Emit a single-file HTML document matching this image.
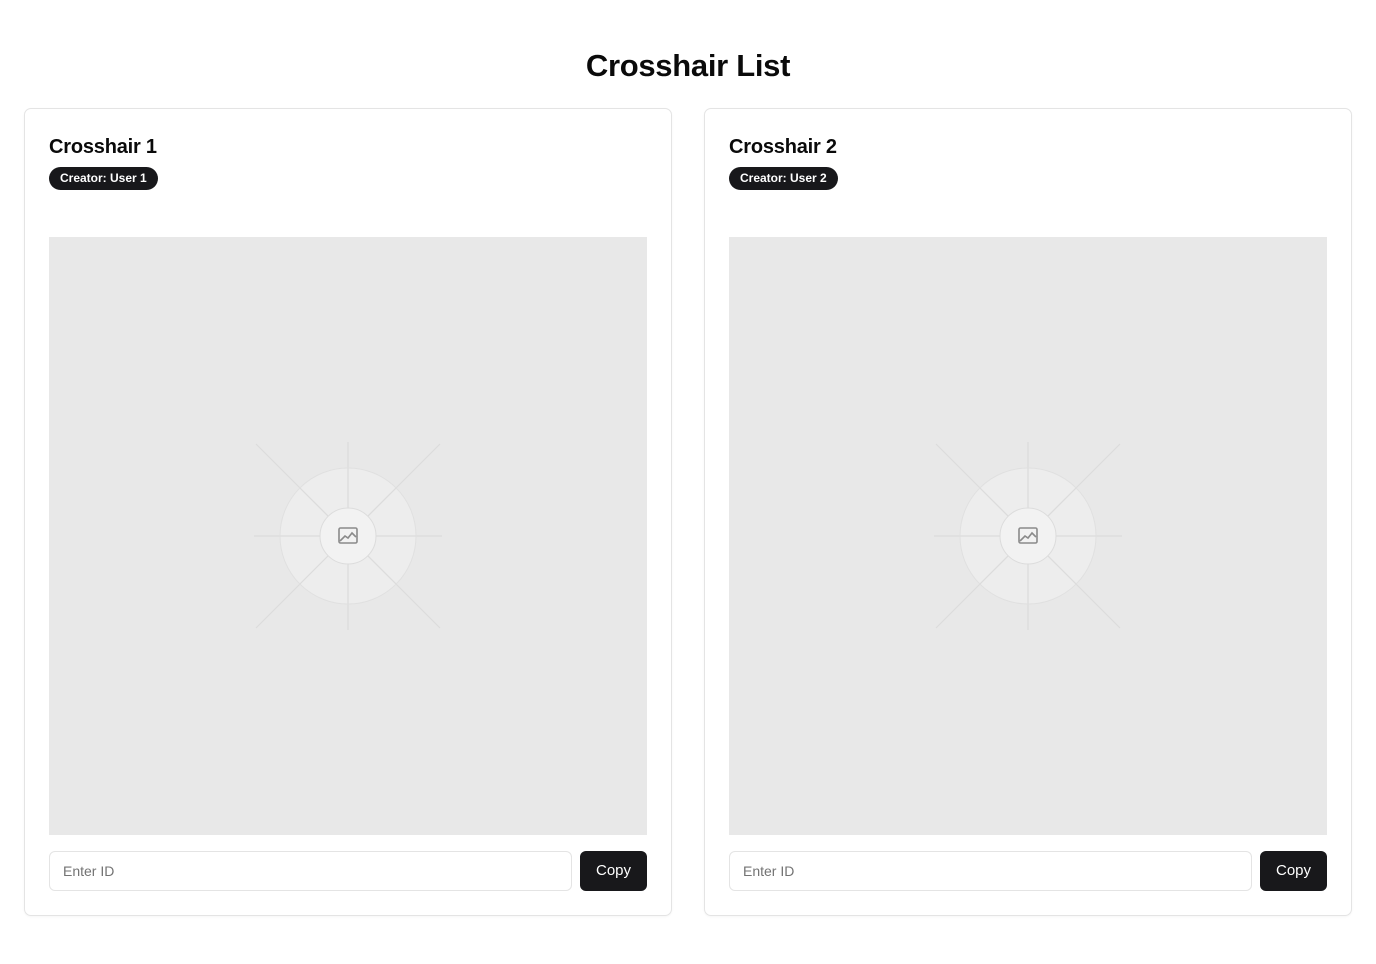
<!DOCTYPE html>
<html><head><meta charset="utf-8"><style>
*{box-sizing:border-box;margin:0;padding:0}
body{width:1376px;height:964px;background:#fff;font-family:"Liberation Sans",sans-serif;color:#0a0a0a;position:relative}
h1{position:absolute;top:48px;left:0;width:1376px;text-align:center;font-size:31px;font-weight:bold;letter-spacing:-0.3px}
.card{position:absolute;top:108px;width:648px;height:808px;border:1px solid #e4e4e4;border-radius:7px;box-shadow:0 1px 2px rgba(0,0,0,.04)}
.t{position:absolute;left:24px;top:27px;font-size:20px;font-weight:bold;letter-spacing:-0.2px}
.b{position:absolute;left:24px;top:58px;height:23px;padding:0 11px;line-height:23px;background:#18181b;color:#fff;border-radius:12px;font-size:12px;font-weight:bold}
.img{position:absolute;left:24px;top:128px;width:598px;height:598px;background:#e8e8e8}
.img svg{position:absolute;left:0;top:0}
.in{position:absolute;left:24px;top:742px;width:523px;height:40px;border:1px solid #e4e4e4;border-radius:6px;padding-left:13px;line-height:38px;font-size:14px;color:#737373}
.btn{position:absolute;left:555px;top:742px;width:67px;height:40px;background:#18181b;color:#fff;border-radius:6px;text-align:center;line-height:40px;font-size:15px}
</style></head><body>
<h1>Crosshair List</h1>
<div class="card" style="left:24px">
<div class="t">Crosshair 1</div><div class="b">Creator: User 1</div>
<div class="img"><svg width="598" height="598"><g transform="translate(299,299)" fill="none"><g stroke="#dcdcdc" stroke-width="1.2"><line x1="-92" y1="-92" x2="92" y2="92"/><line x1="92" y1="-92" x2="-92" y2="92"/><line x1="0" y1="-94" x2="0" y2="94"/><line x1="-94" y1="0" x2="94" y2="0"/></g><circle r="68" fill="#efefef" fill-opacity=".7" stroke="#e0e0e0"/><g stroke="#dcdcdc" stroke-width="1.2"><line x1="-48" y1="-48" x2="48" y2="48"/><line x1="48" y1="-48" x2="-48" y2="48"/><line x1="0" y1="-68" x2="0" y2="68"/><line x1="-68" y1="0" x2="68" y2="0"/></g><circle r="28" fill="#f2f2f2" stroke="#dcdcdc"/><rect x="-9" y="-8" width="18" height="15" rx="1.5" stroke="#8a8a8a" stroke-width="1.6"/><path d="M-8 5 L-3 0 L0 2 L4 -3 L8 1" stroke="#8a8a8a" stroke-width="1.6"/></g></svg></div>
<div class="in">Enter ID</div><div class="btn">Copy</div>
</div>
<div class="card" style="left:704px">
<div class="t">Crosshair 2</div><div class="b">Creator: User 2</div>
<div class="img"><svg width="598" height="598"><g transform="translate(299,299)" fill="none"><g stroke="#dcdcdc" stroke-width="1.2"><line x1="-92" y1="-92" x2="92" y2="92"/><line x1="92" y1="-92" x2="-92" y2="92"/><line x1="0" y1="-94" x2="0" y2="94"/><line x1="-94" y1="0" x2="94" y2="0"/></g><circle r="68" fill="#efefef" fill-opacity=".7" stroke="#e0e0e0"/><g stroke="#dcdcdc" stroke-width="1.2"><line x1="-48" y1="-48" x2="48" y2="48"/><line x1="48" y1="-48" x2="-48" y2="48"/><line x1="0" y1="-68" x2="0" y2="68"/><line x1="-68" y1="0" x2="68" y2="0"/></g><circle r="28" fill="#f2f2f2" stroke="#dcdcdc"/><rect x="-9" y="-8" width="18" height="15" rx="1.5" stroke="#8a8a8a" stroke-width="1.6"/><path d="M-8 5 L-3 0 L0 2 L4 -3 L8 1" stroke="#8a8a8a" stroke-width="1.6"/></g></svg></div>
<div class="in">Enter ID</div><div class="btn">Copy</div>
</div>
</body></html>
